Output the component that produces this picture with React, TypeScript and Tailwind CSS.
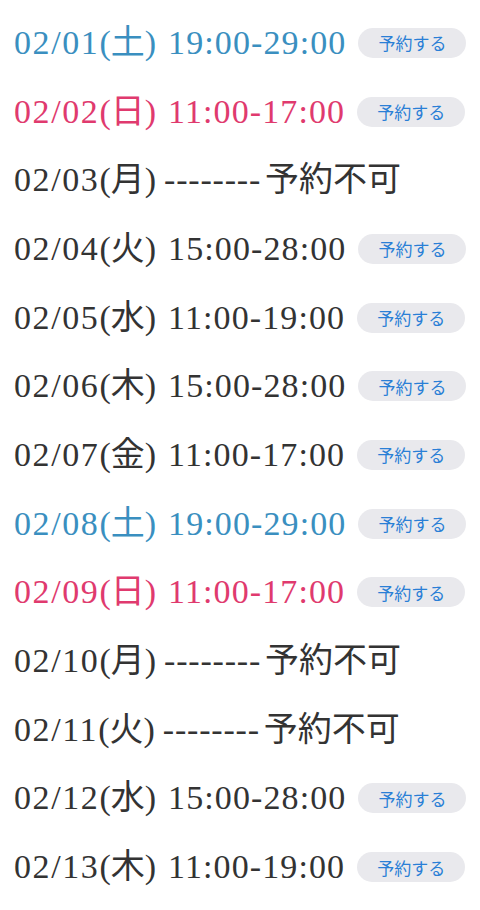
const schedule = [
  { md: "02/01", dow: "土", time: "19:00-29:00", tone: "sat" },
  { md: "02/02", dow: "日", time: "11:00-17:00", tone: "sun" },
  { md: "02/03", dow: "月", time: null, tone: "day" },
  { md: "02/04", dow: "火", time: "15:00-28:00", tone: "day" },
  { md: "02/05", dow: "水", time: "11:00-19:00", tone: "day" },
  { md: "02/06", dow: "木", time: "15:00-28:00", tone: "day" },
  { md: "02/07", dow: "金", time: "11:00-17:00", tone: "day" },
  { md: "02/08", dow: "土", time: "19:00-29:00", tone: "sat" },
  { md: "02/09", dow: "日", time: "11:00-17:00", tone: "sun" },
  { md: "02/10", dow: "月", time: null, tone: "day" },
  { md: "02/11", dow: "火", time: null, tone: "day" },
  { md: "02/12", dow: "水", time: "15:00-28:00", tone: "day" },
  { md: "02/13", dow: "木", time: "11:00-19:00", tone: "day" },
];

const toneClass: Record<string, string> = {
  sat: "text-[#3a8fc0]",
  sun: "text-[#e03a6e]",
  day: "text-[#333333]",
};

const serif = { fontFamily: '"Liberation Serif", "Noto Sans CJK JP", serif' };

export default function App() {
  return (
    <div className="w-[480px] h-[910px] bg-white pt-[8.5px] pl-[14px] overflow-hidden">
      {schedule.map((row) => (
        <div key={row.md} className="flex items-center h-[68.7px]">
          <span
            className={`text-[34px] leading-none whitespace-nowrap ${toneClass[row.tone]}`}
            style={serif}
          >
            <span className="tracking-[1.6px]">{row.md}</span>
            <span>({row.dow})</span>
            {row.time ? (
              <>
                <span className="inline-block w-[12px]" />
                <span className="tracking-[1.1px]">{row.time}</span>
              </>
            ) : (
              <>
                <span className="inline-block w-[8px]" />
                <span className="tracking-[0.8px]">--------</span>
                <span className="inline-block w-[4px]" />
                <span>予約不可</span>
              </>
            )}
          </span>
          {row.time && (
            <button
              className="ml-[12px] h-[30px] w-[108px] rounded-full bg-[#e9e9ed] text-[17px] text-[#2a7fd6] leading-none"
              style={{ fontFamily: '"Noto Sans CJK JP", sans-serif' }}
            >
              予約する
            </button>
          )}
        </div>
      ))}
    </div>
  );
}
